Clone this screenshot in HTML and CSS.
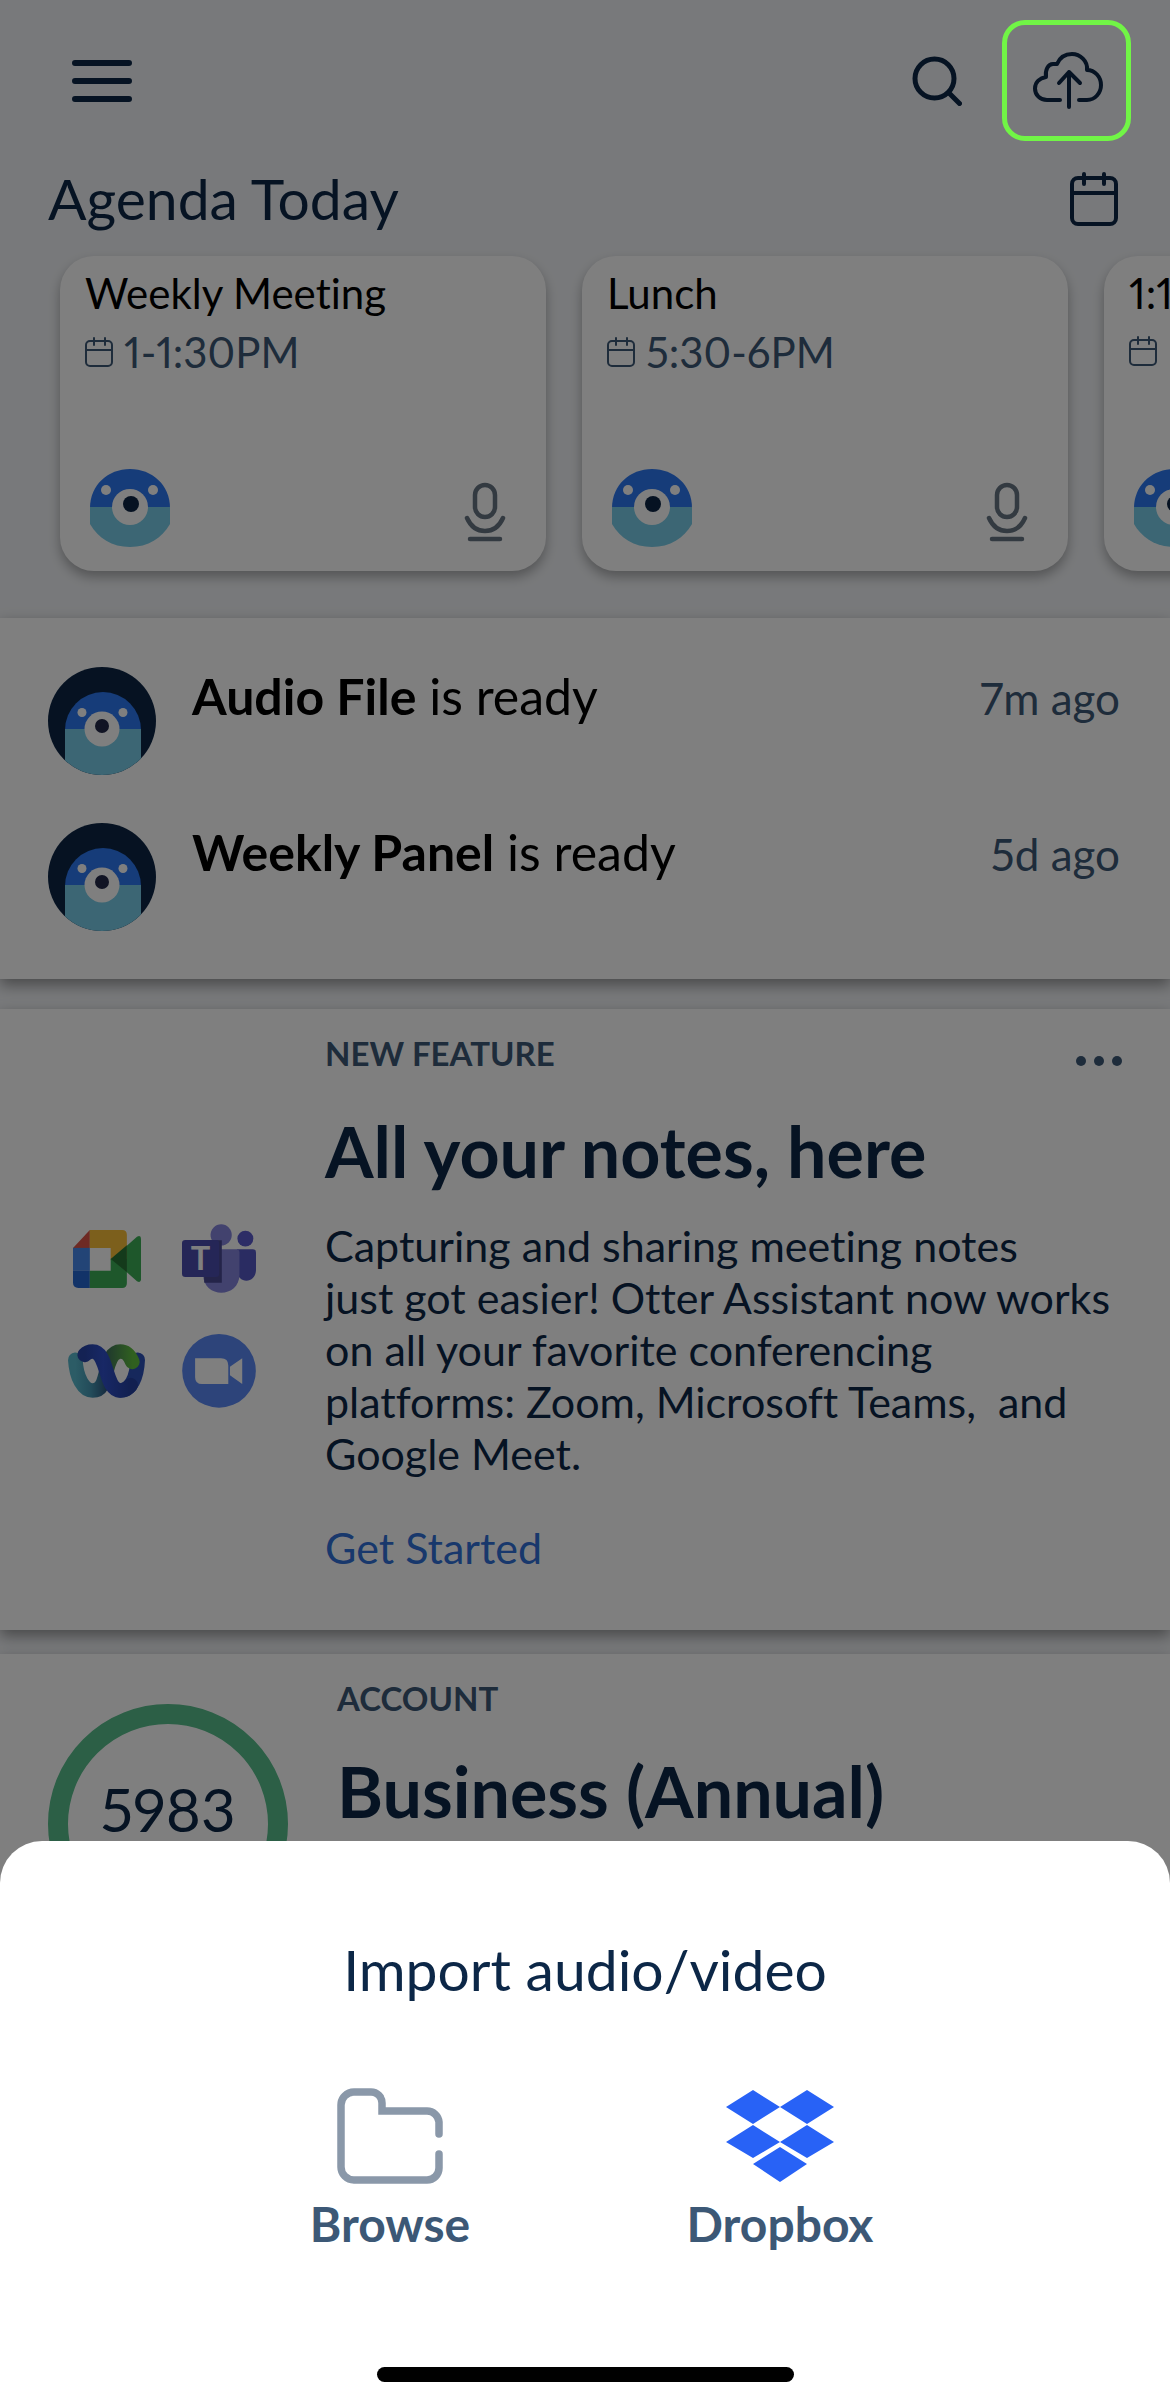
FILE: index.html
```html
<!DOCTYPE html>
<html lang="en">
<head>
<meta charset="utf-8">
<meta name="viewport" content="width=device-width, initial-scale=1">
<title>Agenda Today</title>
<link rel="stylesheet" href="styles.css">
</head>
<body>
<svg class="sprite" aria-hidden="true">
  <symbol id="calendar" viewBox="0 0 28 30">
    <path d="M5 4h18a4 4 0 0 1 4 4v17a4 4 0 0 1-4 4H5a4 4 0 0 1-4-4V8a4 4 0 0 1 4-4zM1 13h26M9 1v7M20 1v7" fill="none" stroke="currentColor" stroke-width="2" stroke-linecap="round"/>
  </symbol>
  <symbol id="otter" viewBox="0 0 80 78">
    <path d="M0 39C0 16 18 0 40 0s40 16 40 39z" fill="#2c78f2"/>
    <path d="M0 38h80v17C72 69 58 78 40 78S8 69 0 55z" fill="#78cce8"/>
    <circle cx="16" cy="21" r="5" fill="#fff"/><circle cx="63" cy="21" r="5" fill="#fff"/>
    <circle cx="40" cy="38" r="18" fill="#fff"/><circle cx="41" cy="35" r="8" fill="#0c2545"/>
  </symbol>
  <symbol id="otter-round" viewBox="0 0 108 108">
    <clipPath id="disc"><circle cx="54" cy="54" r="54"/></clipPath>
    <g clip-path="url(#disc)">
      <path d="M0 0h108v108H0z" fill="#0c2545"/>
      <path d="M17 63a38 38 0 0 1 76 0z" fill="#2c78f2"/>
      <path d="M17 62h76v46H17z" fill="#78cce8"/>
      <circle cx="34" cy="45.500" r="4.500" fill="#fff"/><circle cx="75" cy="45.500" r="4.500" fill="#fff"/>
      <circle cx="54" cy="62" r="17.500" fill="#fff"/><circle cx="54" cy="59" r="7" fill="#222848"/>
    </g>
  </symbol>
  <symbol id="mic" viewBox="0 0 42 60">
    <path d="M11 13a10 10 0 0 1 20 0v12a10 10 0 0 1-20 0zM3 36C7 45 13 49 21 49s14-4 18-13M6 57h30" fill="none" stroke="currentColor" stroke-width="4.500" stroke-linecap="round"/>
  </symbol>
</svg>

<div class="app">
  <header class="topbar">
    <button class="icon-button" type="button" aria-label="Menu">
      <svg width="60" height="42" viewBox="0 0 60 42"><path d="M3 3h54M3 21h54M3 39h54" stroke="currentColor" stroke-width="6" stroke-linecap="round"/></svg>
    </button>
    <div class="topbar-actions">
      <button class="icon-button" type="button" aria-label="Search">
        <svg width="50" height="50" viewBox="0 0 50 50"><circle cx="22.500" cy="22.500" r="19.500" fill="none" stroke="currentColor" stroke-width="5"/><path d="M37 37l10.500 10.500" stroke="currentColor" stroke-width="5" stroke-linecap="round"/></svg>
      </button>
      <button class="icon-button upload" type="button" aria-label="Import audio or video">
        <svg width="70" height="58" viewBox="0 0 70 58" fill="none" stroke="currentColor" stroke-width="4" stroke-linecap="round" stroke-linejoin="round"><path d="M27 48H14C7 48 2 43 2 36.500 2 30 7 26 13 25 12 18 15 12 20 12h4C27 5 33 2 39 2c8 0 16 7 15 16 8 0 14 7 14 15S62 48 54 48H46M36 55V20M26 31l10-11 11 11"/></svg>
      </button>
    </div>
  </header>

  <main>
    <section class="agenda">
      <div class="agenda-head">
        <h1>Agenda Today</h1>
        <button class="icon-button" type="button" aria-label="Open calendar">
          <svg width="48" height="56" viewBox="0 0 48 56"><path d="M8 8h32a6 6 0 0 1 6 6v34a6 6 0 0 1-6 6H8a6 6 0 0 1-6-6V14a6 6 0 0 1 6-6zM2 23h44M14 4v10M34 4v10" fill="none" stroke="currentColor" stroke-width="4" stroke-linecap="round"/></svg>
        </button>
      </div>
      <div class="cards">
        <article class="card">
          <h2>Weekly Meeting</h2>
          <p class="when"><svg width="28" height="30"><use href="#calendar"/></svg>1-1:30PM</p>
          <div class="card-foot"><svg width="80" height="78"><use href="#otter"/></svg><svg class="mic" width="42" height="60"><use href="#mic"/></svg></div>
        </article>
        <article class="card">
          <h2>Lunch</h2>
          <p class="when"><svg width="28" height="30"><use href="#calendar"/></svg>5:30-6PM</p>
          <div class="card-foot"><svg width="80" height="78"><use href="#otter"/></svg><svg class="mic" width="42" height="60"><use href="#mic"/></svg></div>
        </article>
        <article class="card">
          <h2>1:1</h2>
          <p class="when"><svg width="28" height="30"><use href="#calendar"/></svg></p>
          <div class="card-foot"><svg width="80" height="78"><use href="#otter"/></svg><svg class="mic" width="42" height="60"><use href="#mic"/></svg></div>
        </article>
      </div>
    </section>

    <section class="panel updates">
      <div class="update">
        <svg width="108" height="108"><use href="#otter-round"/></svg>
        <p class="update-text"><strong>Audio File</strong> is ready</p>
        <time>7m ago</time>
      </div>
      <div class="update">
        <svg width="108" height="108"><use href="#otter-round"/></svg>
        <p class="update-text"><strong>Weekly Panel</strong> is ready</p>
        <time>5d ago</time>
      </div>
    </section>

    <section class="panel feature">
      <div class="apps">
        <svg width="68" height="58" viewBox="98 83 202 172" role="img" aria-label="Google Meet">
          <path d="M148 83v53H98z" fill="#dc5548"/>
          <path d="M148 83h96q14 0 14 14v76h-48v-37h-62z" fill="#f8be38"/>
          <path d="M98 136h50v68H98z" fill="#4688ec"/>
          <path d="M98 204h50v51h-34q-16 0-16-16z" fill="#2466d0"/>
          <path d="M148 204h62v-36h48v73q0 14-14 14h-96z" fill="#3cae57"/>
          <path d="M258 130l30-27q12-6 12 6v120q0 12-12 6l-30-27z" fill="#3cae57"/>
          <path d="M210 169l48-41v80z" fill="#287436"/>
        </svg>
        <svg width="74" height="69" viewBox="425 72 223 206" role="img" aria-label="Microsoft Teams">
          <circle cx="616" cy="115" r="24" fill="#5a5acc"/><circle cx="543" cy="104" r="32" fill="#8484dc"/>
          <path d="M590 147h48q10 0 10 10v51c0 45-58 45-58 0z" fill="#5558c4"/>
          <path d="M489 147h99q10 0 10 10v67c0 72-109 72-109 0z" fill="#8484dc"/>
          <path d="M489 120h56v128h-53z" fill="#484892"/>
          <rect x="425" y="119" width="112" height="112" rx="10" fill="#4a4cae"/>
          <text class="teams-letter" x="481" y="210" text-anchor="middle">T</text>
        </svg>
        <svg class="webex" width="77" height="54" viewBox="88 430 231 161" role="img" aria-label="Webex">
          <defs>
            <linearGradient id="wx-teal" x1="0" y1="0" x2="1" y2="0"><stop offset="0" stop-color="#58b8cc"/><stop offset=".5" stop-color="#4698b4"/><stop offset="1" stop-color="#2e5880"/></linearGradient>
            <linearGradient id="wx-green" x1="0" y1="0" x2="1" y2="0"><stop offset="0" stop-color="#40705c"/><stop offset="1" stop-color="#60c040"/></linearGradient>
            <linearGradient id="wx-blue" x1="0" y1="0" x2="1" y2="0"><stop offset="0" stop-color="#2844a8"/><stop offset=".4" stop-color="#3050cc"/><stop offset="1" stop-color="#2440a0"/></linearGradient>
          </defs>
          <g fill="none" stroke-width="44" stroke-linecap="round">
            <path d="M297 477C295 530 276 569 245 569" stroke="#2c50b8"/>
            <path d="M110 477C113 530 134 569 162 569 190 569 196 542 203 512" stroke="url(#wx-teal)"/>
            <path d="M203 512C211 480 220 452 245 452 264 452 273 464 281 483" stroke="url(#wx-green)"/>
            <path d="M138 462C145 454 153 452 162 452 208 452 198 569 245 569 258 569 268 563 276 553" stroke="url(#wx-blue)"/>
          </g>
        </svg>
        <svg width="74" height="74" viewBox="424 399 222 223" role="img" aria-label="Zoom">
          <circle cx="535" cy="510" r="111" fill="#5a88f4"/>
          <path d="M463 472h78q22 0 22 22v56h-79q-21 0-21-21zM568 498l37-26v78l-37-27z" fill="#fff"/>
        </svg>
      </div>
      <div class="feature-body">
        <div class="eyebrow-row">
          <p class="eyebrow">NEW FEATURE</p>
          <button class="icon-button more" type="button" aria-label="More options">
            <svg width="46" height="10" viewBox="0 0 46 10" fill="currentColor"><circle cx="5" cy="5" r="5"/><circle cx="23" cy="5" r="5"/><circle cx="41" cy="5" r="5"/></svg>
          </button>
        </div>
        <h2>All your notes, here</h2>
        <p class="copy">Capturing and sharing meeting notes<br>just got easier! Otter Assistant now works<br>on all your favorite conferencing<br>platforms: Zoom, Microsoft Teams,&nbsp; and<br>Google Meet.</p>
        <a class="start" href="#start">Get Started</a>
      </div>
    </section>

    <section class="panel account">
      <div class="ring">5983</div>
      <div class="account-body">
        <p class="eyebrow">ACCOUNT</p>
        <h2>Business (Annual)</h2>
      </div>
    </section>
  </main>
</div>

<div class="scrim"></div>

<section class="sheet" role="dialog" aria-labelledby="sheet-title">
  <h2 id="sheet-title">Import audio/video</h2>
  <div class="sources">
    <button class="source" type="button">
      <svg width="106" height="96" viewBox="0 0 106 96"><path d="M102 46V34A12 12 0 0 0 90 23H45V15A11 11 0 0 0 34 4H17A13 13 0 0 0 4 17V79A13 13 0 0 0 17 92H90A12 12 0 0 0 102 80V66" fill="none" stroke="#8a98a9" stroke-width="7.500" stroke-linecap="round"/></svg>
      Browse
    </button>
    <button class="source" type="button">
      <svg width="108" height="96" viewBox="0 0 108 96" fill="#2862f6"><path d="M27 2l27 17-27 17L0 19zM81 2l27 17-27 17-27-17zM27 37l27 17-27 16L0 54zM81 37l27 17-27 16-27-16zM54 59l27 17-27 18-27-18z"/></svg>
      Dropbox
    </button>
  </div>
  <div class="home-bar"></div>
</section>
</body>
</html>
```
FILE: styles.css
```css
* { box-sizing: border-box; }

body {
  margin: 0;
  font-family: Lato, "Open Sans", sans-serif;
  font-size: 43px;
  font-variant-ligatures: none;
  font-variant-numeric: proportional-nums;
  line-height: 52px;
  color: #0c2747;
  background: #f1f3f6;
}

h1, h2, p { margin: 0; font-weight: 400; }
svg { display: block; flex: none; }
.sprite { position: absolute; width: 0; height: 0; }

.icon-button {
  display: flex;
  align-items: center;
  justify-content: center;
  padding: 0;
  border: 0;
  background: none;
  color: inherit;
}

.app { min-height: 100vh; overflow: hidden; }

.topbar {
  display: flex;
  align-items: center;
  justify-content: space-between;
  padding: 20px 39px 20px 72px;
}
.topbar-actions { display: flex; align-items: center; gap: 40px; }
.upload { position: relative; width: 129px; height: 121px; padding-left: 2px; }
/* The highlight stays bright above the scrim. */
.upload::after {
  content: "";
  position: absolute;
  inset: 0;
  z-index: 2;
  border: 5px solid #71f546;
  border-radius: 23px;
}

.agenda-head {
  display: flex;
  align-items: center;
  justify-content: space-between;
  padding: 0 52px 0 48px;
}
.agenda-head h1 { font-size: 57px; line-height: 74px; }

.cards { display: flex; gap: 36px; padding: 21px 60px 47px; }
.card {
  display: flex;
  flex: none;
  flex-direction: column;
  gap: 8px;
  width: 486px;
  min-height: 315px;
  padding: 12px 25px 24px;
  border-radius: 34px;
  background: #fff;
  box-shadow: 0 6px 12px rgba(0, 0, 0, .3);
}
.card h2 { font-size: 42px; line-height: 50px; color: #000; }
.when { display: flex; align-items: center; gap: 11px; min-height: 50px; font-size: 42px; color: #3c5876; }
.card-foot {
  display: flex;
  align-items: flex-end;
  justify-content: space-between;
  margin-top: auto;
  padding: 0 15px 0 5px;
}
.mic { margin-bottom: 5px; color: #667482; }

.panel { background: #fff; box-shadow: 0 6px 14px rgba(0, 0, 0, .4); }

.updates { display: grid; gap: 48px; padding: 49px 50px 48px 48px; }
.update { display: flex; gap: 36px; }
.update-text { flex: 1; font-size: 50px; line-height: 58px; color: #000; }
.update time { font-size: 44px; line-height: 62px; color: #3c5876; }

.feature {
  display: grid;
  grid-template-columns: 325px 1fr;
  margin-top: 30px;
  padding: 24px 48px 56px 0;
}
.apps {
  display: grid;
  grid-template-columns: repeat(2, 112px);
  grid-auto-rows: 112px;
  place-content: center;
  place-items: center;
  padding-top: 22px;
}
.webex { overflow: visible; }
.teams-letter { font-size: 98px; font-weight: 700; fill: #fff; }
.eyebrow-row { display: flex; align-items: center; justify-content: space-between; }
.eyebrow { font-size: 33px; font-weight: 700; line-height: 40px; color: #3c5876; }
.more { height: 40px; padding-top: 16px; color: #3c5876; }
.feature h2, .account h2 { font-size: 70px; font-weight: 700; line-height: 80px; }
.feature h2 { margin: 38px 0 29px; }
.start { display: inline-block; margin-top: 42px; color: #3070d8; text-decoration: none; }

.account { display: flex; align-items: flex-start; gap: 49px; margin-top: 24px; padding: 24px 48px 120px; }
.ring {
  display: flex;
  align-items: center;
  justify-content: center;
  width: 240px;
  height: 240px;
  margin-top: 26px;
  padding-bottom: 30px;
  border: 20px solid #58be8c;
  border-radius: 50%;
  font-size: 60px;
}
.account h2 { margin-top: 33px; }

.scrim { position: fixed; inset: 0; z-index: 1; background: rgba(0, 0, 0, .5); }

.sheet {
  position: fixed;
  right: 0;
  bottom: 0;
  left: 0;
  z-index: 3;
  padding: 96px 0 24px;
  border-radius: 42px 42px 0 0;
  background: #fff;
}
.sheet h2 { font-size: 57px; line-height: 64px; text-align: center; }
.sources {
  display: grid;
  grid-template-columns: repeat(2, 33.33%);
  justify-content: center;
  margin-top: 87px;
}
.source {
  display: flex;
  flex-direction: column;
  align-items: center;
  gap: 11px;
  padding: 0;
  border: 0;
  background: none;
  font: 700 48px/58px Lato, "Open Sans", sans-serif;
  color: #3c5876;
}
.home-bar { width: 417px; height: 15px; margin: 114px auto 0; border-radius: 8px; background: #000; }
```
